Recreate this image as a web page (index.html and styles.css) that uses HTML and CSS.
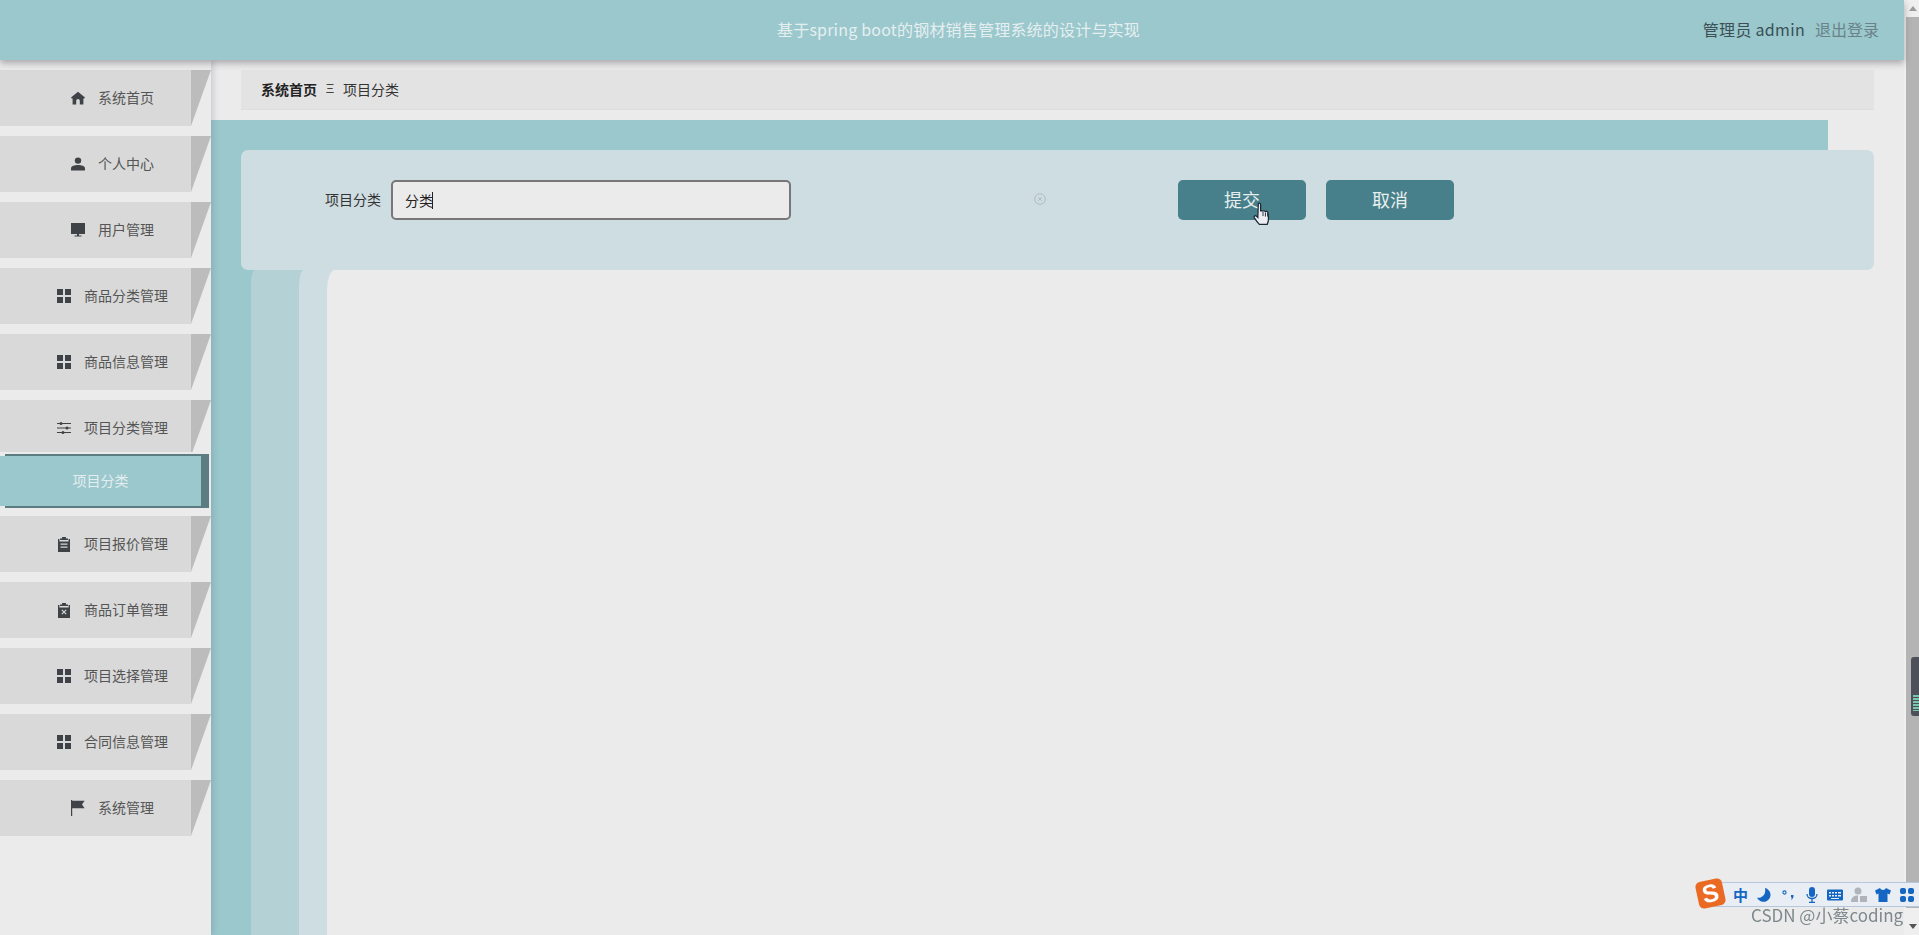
FILE: index.html
```html
<!DOCTYPE html>
<html lang="zh-CN">
<head>
<meta charset="utf-8">
<title>项目分类</title>
<link rel="stylesheet" href="styles.css">
</head>
<body>
<svg class="defs" width="0" height="0" aria-hidden="true">
  <symbol id="i-grid" viewBox="0 0 14 14"><path d="M0 0h6v6H0zM8 0h6v6H8zM0 8h6v6H0zM8 8h6v6H8z"/></symbol>
</svg>
<div class="window">
  <div class="page">
    <header class="topbar">
      <div></div>
      <div class="title">基于spring boot的钢材销售管理系统的设计与实现</div>
      <div class="user"><span class="user-name">管理员 admin</span><span class="logout">退出登录</span></div>
    </header>
    <div class="body-row">
      <nav class="sidebar">
        <a class="item"><svg class="ico" viewBox="0 0 14 14"><path d="M7 .8 0 6.600l1 1.200.6-.5V13.600h3.600V9.800a1.800 1.800 0 0 1 3.600 0v3.800h3.600V7.300l.6.5 1-1.200z"/></svg><span>系统首页</span></a>
        <a class="item"><svg class="ico" viewBox="0 0 14 14"><circle cx="7" cy="3.600" r="3.200"/><path d="M0 13.600v-2.400C0 9.200 3.600 8 7 8s7 1.200 7 3.200v2.400z"/></svg><span>个人中心</span></a>
        <a class="item"><svg class="ico" viewBox="0 0 14 14"><path d="M0 0h14v11H0zM6 11h2v1.600H6zM3.500 12.600h7v1h-7z"/></svg><span>用户管理</span></a>
        <a class="item"><svg class="ico"><use href="#i-grid"/></svg><span>商品分类管理</span></a>
        <a class="item"><svg class="ico"><use href="#i-grid"/></svg><span>商品信息管理</span></a>
        <a class="item"><svg class="ico" viewBox="0 0 14 14"><path d="M0 2h14v1H0zM0 6.500h14v1H0zM0 11h14v1H0z"/><circle cx="4" cy="2.500" r="1.500"/><circle cx="10" cy="7" r="1.500"/><circle cx="6" cy="11.500" r="1.500"/></svg><span>项目分类管理</span></a>
        <div class="sub"><a class="sub-link"><span>项目分类</span></a></div>
        <a class="item"><svg class="ico ico-tall" viewBox="0 0 14 15"><path fill-rule="evenodd" d="M5 0h4v1.400h2V3H3V1.400h2zM1 2h1.400v2.400h9.200V2H13v13H1zM3.500 6.500v1.300h7V6.500zM3.500 9.500v1.300h7V9.500z"/></svg><span>项目报价管理</span></a>
        <a class="item"><svg class="ico ico-tall" viewBox="0 0 14 15"><path fill-rule="evenodd" d="M5 0h4v1.400h2V3H3V1.400h2zM1 2h1.400v2.400h9.200V2H13v13H1zM5.200 6.400 4.400 7.200 6.200 9l-1.800 1.800.8.8L7 9.800l1.800 1.800.8-.8L7.800 9l1.800-1.800-.8-.8L7 8.200z"/></svg><span>商品订单管理</span></a>
        <a class="item"><svg class="ico"><use href="#i-grid"/></svg><span>项目选择管理</span></a>
        <a class="item"><svg class="ico"><use href="#i-grid"/></svg><span>合同信息管理</span></a>
        <a class="item"><svg class="ico ico-flag" viewBox="0 0 14 16"><path d="M0 0h1.200v16H0zM1.200 .8H13.600L11 4.400l2.600 3.800H1.200z"/></svg><span>系统管理</span></a>
      </nav>
      <main class="main">
        <div class="crumbs"><b>系统首页</b><span class="sep">Ξ</span><span>项目分类</span></div>
        <section class="stage">
          <form class="card">
            <label class="field-label">项目分类</label>
            <div class="input"><span class="input-text">分类</span><i class="caret"></i></div>
            <svg class="clear" viewBox="0 0 12 12"><circle cx="6" cy="6" r="5.300"/><path d="M4.200 4.200 7.800 7.800M7.800 4.200 4.200 7.800"/></svg>
            <button class="btn btn-first" type="button">提交</button>
            <button class="btn" type="button">取消</button>
          </form>
          <div class="band-a"><div class="band-b"><div class="band-c"></div></div></div>
        </section>
      </main>
    </div>
  </div>
  <div class="scrollbar">
    <div class="arrow-up"></div>
    <div class="thumb"></div>
    <div class="arrow-down"></div>
  </div>
</div>

<svg class="hand" viewBox="0 0 18 24"><path d="M5 1.500c1-.8 2.200-.2 2.200 1V9c0-1 2.300-1 2.300.2 0-1 2.300-1 2.300.3 .2-.9 2.200-.8 2.300.4l.4 3.100c.6 3.500.2 6-1 8.500H6c-1.500-1.500-3.300-4-4.800-6.300-.9-1.500.8-2.700 2-1.600l1.300 1.300z"/><path class="hand-line" d="M9.500 9.500v4M11.800 10v4M14 10.500v3.500"/></svg>

<div class="ime">
  <div class="ime-logo"><span>S</span></div>
  <div class="ime-bar">
    <span class="ime-zh">中</span>
    <svg viewBox="0 0 16 16"><path d="M9 1a7 7 0 1 1-8 9.500c4 1.500 9.500-2.500 8-9.500z"/></svg>
    <svg viewBox="0 0 16 16"><circle cx="4.500" cy="5.500" r="1.600" fill="none" stroke="#1566c2" stroke-width="1.100"/><path d="M11 8h2.500c.3 2.500-.8 4-2.500 5 .6-1 .8-1.800.8-2.500H11z"/></svg>
    <svg viewBox="0 0 16 16"><rect x="5" y="0" width="6" height="10" rx="3"/><path d="M3 7c0 6 10 6 10 0M8 12v3M5 15.500h6" fill="none" stroke="#1566c2" stroke-width="1.300"/></svg>
    <svg viewBox="0 0 16 16"><path fill-rule="evenodd" d="M1 2.500h14a1 1 0 0 1 1 1v9a1 1 0 0 1-1 1H1a1 1 0 0 1-1-1v-9a1 1 0 0 1 1-1zM2 5v1.500h2V5zm3 0v1.500h2V5zm3 0v1.500h2V5zm3 0v1.500h3V5zM2 8v1.500h2V8zm3 0v1.500h2V8zm3 0v1.500h2V8zm3 0v1.500h3V8zM4 11v1h8v-1z"/></svg>
    <svg class="ime-grey" viewBox="0 0 16 16"><circle cx="7" cy="4" r="3.500"/><path d="M0 15c0-5 3-6.500 7-6.500V15z"/><path d="M9 9h7v6H9z"/></svg>
    <svg viewBox="0 0 16 16"><path d="M5 1 0 3.500l1.500 4L3.500 6.500V15h9V6.500l2 1 1.500-4L11 1C10 3.500 6 3.500 5 1z"/></svg>
    <svg viewBox="0 0 16 16"><rect x="1" y="1" width="6" height="6" rx="2"/><rect x="9" y="1" width="6" height="6" rx="2"/><rect x="1" y="9" width="6" height="6" rx="2"/><rect x="9" y="9" width="6" height="6" rx="2"/></svg>
  </div>
</div>
<div class="watermark">CSDN @小蔡coding</div>
<div class="scroll-widget"><i></i></div>
</body>
</html>
```

FILE: styles.css
```css
* { box-sizing: border-box; }
html, body { margin: 0; height: 100%; overflow: hidden; }
body {
  background: #ebebeb;
  font-family: "Noto Sans CJK SC", "Noto Sans", sans-serif;
  font-size: 14px;
  color: #333;
}
.defs { position: absolute; }
.window { display: flex; height: 935px; }
.page { flex: 1; min-width: 0; display: flex; flex-direction: column; }

.topbar {
  position: relative;
  z-index: 3;
  flex: none;
  height: 60px;
  padding-left: 13px;
  padding-bottom: 3px;
  display: grid;
  grid-template-columns: 1fr auto 1fr;
  align-items: center;
  background: #9ac8cd;
  box-shadow: 0 3px 7px rgba(80, 80, 90, .45);
}
.title { font-size: 16px; color: #e6eff0; letter-spacing: .2px; }
.user { display: flex; justify-content: flex-end; gap: 10px; padding-right: 25px; font-size: 16px; }
.user-name { color: #3b4f55; letter-spacing: .3px; }
.logout { color: #6a8389; }

.body-row { flex: 1; min-height: 0; display: flex; }
.sidebar {
  position: relative;
  z-index: 2;
  flex: none;
  width: 211px;
  padding-top: 10px;
  background: #ebebeb;
  box-shadow: 2px 0 6px rgba(70, 80, 90, .22);
}
.item {
  position: relative;
  display: flex;
  align-items: center;
  justify-content: center;
  gap: 13px;
  width: 191px;
  height: 56px;
  margin-bottom: 10px;
  padding-left: 34px;
  background: #d9d9d9;
  color: #555;
}
.item span { padding-bottom: 2px; }
.item::after {
  content: "";
  position: absolute;
  left: 100%;
  top: 0;
  width: 20px;
  height: 100%;
  background: #bdbcbc;
  clip-path: polygon(0 0, 100% 0, 0 100%);
}
.ico { flex: none; width: 14px; height: 14px; fill: #3f4247; }
.ico-tall { height: 15px; }
.ico-flag { height: 16px; }
.sub {
  position: relative;
  margin-top: -14px;
  margin-bottom: 8px;
  padding-top: 2px;
  background: #ebebeb;
}
.sub-link {
  display: block;
  width: 204px;
  height: 54px;
  margin-left: 5px;
  border: 2px solid #5b7d82;
  border-left: 0;
  border-right-width: 8px;
}
.sub-link span {
  display: flex;
  align-items: center;
  justify-content: center;
  width: 201px;
  height: 50px;
  margin-left: -5px;
  padding-bottom: 2px;
  background: #9ac8cd;
  color: #e4eeef;
}

.main { flex: 1; min-width: 0; padding-top: 10px; display: flex; flex-direction: column; }
.crumbs {
  flex: none;
  display: flex;
  align-items: center;
  height: 40px;
  margin: 0 30px 0 30px;
  padding: 0 0 2px 20px;
  background: #e4e3e4;
  border-bottom: 1px solid #dedede;
  color: #333;
}
.crumbs b { color: #222; font-weight: 700; }
.sep {
  width: 26px;
  text-align: center;
  font-family: "Liberation Sans", sans-serif;
  font-size: 13px;
  color: #444;
}

.stage {
  flex: 1;
  min-height: 0;
  display: flex;
  flex-direction: column;
  width: 1617px;
  margin-top: 10px;
  padding: 30px 0 0 30px;
  background: #9ac8cd;
}
.card {
  flex: none;
  display: flex;
  align-items: flex-start;
  height: 120px;
  margin-right: -46px;
  padding: 30px 0 0 84px;
  border-radius: 7px;
  background: #cedde1;
}
.field-label {
  width: 57px;
  margin-right: 9px;
  line-height: 38px;
  white-space: nowrap;
  color: #333;
}
.input {
  display: flex;
  align-items: center;
  width: 400px;
  height: 40px;
  padding: 0 0 1px 12px;
  border: 2px solid #777;
  border-radius: 5px;
  background: #ebebeb;
  color: #222;
}
.caret { width: 1px; height: 17px; background: #222; margin: 2px 0 0 -1px; }
.clear {
  flex: none;
  width: 12px;
  height: 12px;
  margin: 13px 0 0 243px;
  fill: none;
  stroke: #aebbc0;
  stroke-width: 1;
}
.btn {
  flex: none;
  width: 128px;
  height: 40px;
  margin-left: 20px;
  padding: 0 0 2px;
  border: 0;
  border-radius: 5px;
  background: #47808a;
  color: #e8efef;
  font: inherit;
  font-size: 18px;
}
.btn-first { margin-left: 132px; }

.band-a {
  flex: 1;
  margin: 0 -76px 0 10px;
  padding-left: 48px;
  background: #b4d1d6;
  border-top-left-radius: 4px 14px;
}
.band-b {
  height: 100%;
  padding-left: 28px;
  background: #cedde1;
  border-top-left-radius: 5px 16px;
}
.band-c {
  height: 100%;
  background: #ebebeb;
  border-top-left-radius: 8px 20px;
}

.scrollbar {
  flex: none;
  position: relative;
  width: 15px;
  background: #efefef;
  display: flex;
  flex-direction: column;
}
.arrow-up, .arrow-down {
  flex: none;
  height: 17px;
  display: flex;
  align-items: center;
  justify-content: center;
}
.arrow-up::before, .arrow-down::before {
  content: "";
  width: 0;
  height: 0;
  margin-left: 2px;
  border: 4px solid transparent;
}
.arrow-up::before { border-bottom: 5px solid #9c9c9c; border-top: 0; }
.arrow-down::before { border-top: 5px solid #555; border-bottom: 0; }
.thumb { flex: 1; margin: 0 0 10px 2px; background: #b4b4b4; }

.hand {
  position: fixed;
  left: 1253px;
  top: 202px;
  width: 19px;
  height: 25px;
  z-index: 6;
  fill: #eceef4;
  stroke: #1d2836;
  stroke-width: 1.2;
}
.hand-line { fill: none; stroke-width: .9; }

.ime {
  position: fixed;
  left: 1695px;
  top: 877px;
  width: 224px;
  height: 36px;
  z-index: 5;
}
.ime-bar {
  position: absolute;
  left: 17px;
  top: 5px;
  right: 0;
  height: 25px;
  display: flex;
  align-items: center;
  justify-content: space-between;
  padding: 0 4px 0 20px;
  border: 1px solid #b5c6dd;
  border-right: 0;
  background: #e9eef4;
}
.ime-bar svg { flex: none; width: 16px; height: 16px; fill: #1566c2; }
.ime-bar .ime-grey { fill: #b0b4b8; }
.ime-zh { font-size: 15px; font-weight: 700; color: #1566c2; line-height: 1; }
.ime-logo {
  position: absolute;
  left: 2px;
  top: 3px;
  z-index: 1;
  width: 27px;
  height: 27px;
  display: flex;
  align-items: center;
  justify-content: center;
  border-radius: 5px;
  background: #ea6a24;
  transform: rotate(-12deg);
}
.ime-logo span {
  font: 900 25px/1 "Liberation Sans", sans-serif;
  color: #fff;
}
.watermark {
  position: fixed;
  left: 1751px;
  top: 904px;
  z-index: 6;
  font-size: 17px;
  line-height: 22px;
  color: #7e888c;
  white-space: nowrap;
}
.scroll-widget {
  position: fixed;
  left: 1911px;
  top: 657px;
  width: 8px;
  height: 59px;
  z-index: 4;
  border-radius: 3px 0 0 3px;
  background: #4d5059;
}
.scroll-widget i {
  position: absolute;
  left: 2px;
  right: 0;
  bottom: 5px;
  height: 16px;
  background: repeating-linear-gradient(#77c7ae 0 2px, #4d5059 2px 3px);
}
```
